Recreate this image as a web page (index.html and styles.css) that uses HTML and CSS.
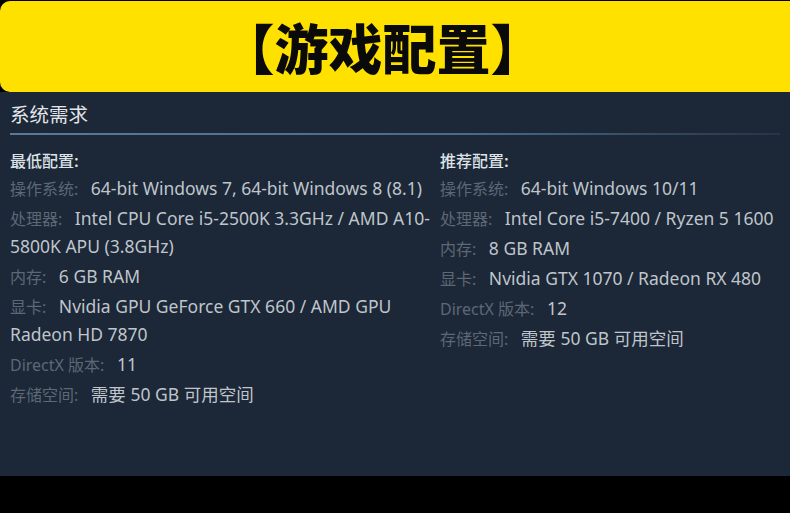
FILE: index.html
```html
<!DOCTYPE html>
<html lang="zh-CN">
<head>
<meta charset="utf-8">
<title>游戏配置</title>
<link rel="stylesheet" href="styles.css">
</head>
<body>
<div class="page">
  <header class="banner">
    <h1 class="banner-title">【游戏配置】</h1>
  </header>
  <section class="panel">
    <h2 class="panel-title">系统需求</h2>
    <div class="cols">
      <div class="col">
        <div class="col-head">最低配置:</div>
        <ul class="reqs">
          <li><span class="lbl">操作系统:</span> 64-bit Windows 7, 64-bit Windows 8 (8.1)</li>
          <li><span class="lbl">处理器:</span> Intel CPU Core i5-2500K 3.3GHz / AMD A10-5800K APU (3.8GHz)</li>
          <li><span class="lbl">内存:</span> 6 GB RAM</li>
          <li><span class="lbl">显卡:</span> Nvidia GPU GeForce GTX 660 / AMD GPU Radeon HD 7870</li>
          <li><span class="lbl">DirectX 版本:</span> 11</li>
          <li><span class="lbl">存储空间:</span> 需要 50 GB 可用空间</li>
        </ul>
      </div>
      <div class="col">
        <div class="col-head">推荐配置:</div>
        <ul class="reqs">
          <li><span class="lbl">操作系统:</span> 64-bit Windows 10/11</li>
          <li><span class="lbl">处理器:</span> Intel Core i5-7400 / Ryzen 5 1600</li>
          <li><span class="lbl">内存:</span> 8 GB RAM</li>
          <li><span class="lbl">显卡:</span> Nvidia GTX 1070 / Radeon RX 480</li>
          <li><span class="lbl">DirectX 版本:</span> 12</li>
          <li><span class="lbl">存储空间:</span> 需要 50 GB 可用空间</li>
        </ul>
      </div>
    </div>
  </section>
</div>
</body>
</html>
```

FILE: styles.css
```css
* { box-sizing: border-box; }
html, body {
  margin: 0;
  padding: 0;
  background: #000;
}
body {
  width: 790px;
  height: 513px;
  overflow: hidden;
  font-family: "Noto Sans", "Noto Sans CJK SC", sans-serif;
}
.page {
  padding-top: 1px;
}
.banner {
  height: 91px;
  background: #ffe100;
  border-radius: 10px 0 0 10px;
  display: flex;
  align-items: center;
  justify-content: center;
  padding-right: 25px;
}
.banner-title {
  margin: 0;
  font-family: "Noto Sans CJK SC", sans-serif;
  font-weight: 900;
  font-size: 54px;
  line-height: 1;
  color: #0a0a0a;
}
.panel {
  background: #1c2737;
  height: 384px;
  padding: 8px 10px 0 10px;
}
.panel-title {
  margin: 0;
  font-family: "Noto Sans CJK SC", sans-serif;
  font-weight: 400;
  font-size: 19.5px;
  line-height: 28px;
  color: #e3e6e9;
  padding-bottom: 5px;
  border-bottom: 2px solid transparent;
  border-image: linear-gradient(to right, #5a7a98 0%, #4b6a88 60%, rgba(75,106,136,0.2) 100%) 1;
}
.cols {
  display: grid;
  grid-template-columns: 423px 1fr;
  column-gap: 7px;
  padding-top: 11px;
}
.col-head {
  font-family: "Noto Sans CJK SC", sans-serif;
  font-weight: 500;
  font-size: 16px;
  line-height: 28px;
  color: #dde2e6;
}
.reqs {
  list-style: none;
  margin: 0;
  padding: 0;
}
.reqs li {
  font-size: 17.5px;
  line-height: 28px;
  margin-bottom: 2px;
  color: #bfc5cb;
}
.lbl {
  font-size: 16px;
  line-height: 1;
  margin-right: 8px;
  color: #5c6876;
}
```
